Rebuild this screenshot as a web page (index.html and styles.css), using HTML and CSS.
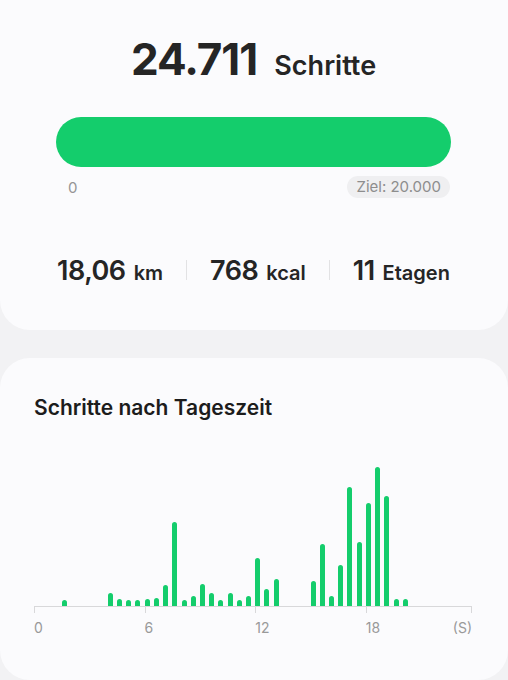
FILE: index.html
```html
<!DOCTYPE html>
<html lang="de">
<head>
    <meta charset="UTF-8">
    <meta name="viewport" content="width=device-width, initial-scale=1.0">
    <title>Schritte</title>
    <link rel="stylesheet" href="styles.css">
</head>
<body>
    <section class="summary">
        <div class="total">24.711<span class="unit">Schritte</span></div>
        <div class="progress"></div>
        <div class="scale">
            <span class="start">0</span>
            <span class="goal">Ziel: 20.000</span>
        </div>
        <div class="stats">
            <div class="stat">18,06<span>km</span></div>
            <div class="sep"></div>
            <div class="stat">768<span>kcal</span></div>
            <div class="sep"></div>
            <div class="stat">11<span>Etagen</span></div>
        </div>
    </section>

    <section class="chart">
        <h2>Schritte nach Tageszeit</h2>
        <div class="plot">
            <div class="bars">
                <div></div><div></div><div></div>
                <div class="bar" style="height:6px"></div>
                <div></div><div></div><div></div><div></div>
                <div class="bar" style="height:13px"></div>
                <div class="bar" style="height:7px"></div>
                <div class="bar" style="height:6px"></div>
                <div class="bar" style="height:6px"></div>
                <div class="bar" style="height:7px"></div>
                <div class="bar" style="height:8px"></div>
                <div class="bar" style="height:21px"></div>
                <div class="bar" style="height:84px"></div>
                <div class="bar" style="height:6px"></div>
                <div class="bar" style="height:10px"></div>
                <div class="bar" style="height:22px"></div>
                <div class="bar" style="height:13px"></div>
                <div class="bar" style="height:6px"></div>
                <div class="bar" style="height:13px"></div>
                <div class="bar" style="height:6px"></div>
                <div class="bar" style="height:10px"></div>
                <div class="bar" style="height:48px"></div>
                <div class="bar" style="height:17px"></div>
                <div class="bar" style="height:27px"></div>
                <div></div><div></div><div></div>
                <div class="bar" style="height:25px"></div>
                <div class="bar" style="height:62px"></div>
                <div class="bar" style="height:10px"></div>
                <div class="bar" style="height:41px"></div>
                <div class="bar" style="height:119px"></div>
                <div class="bar" style="height:64px"></div>
                <div class="bar" style="height:103px"></div>
                <div class="bar" style="height:139px"></div>
                <div class="bar" style="height:110px"></div>
                <div class="bar" style="height:7px"></div>
                <div class="bar" style="height:7px"></div>
            </div>
            <div class="ticks">
                <div></div><div></div><div></div><div></div>
            </div>
            <div class="labels">
                <span>0</span>
                <span>6</span>
                <span>12</span>
                <span class="last">18<em>(S)</em></span>
            </div>
        </div>
    </section>
</body>
</html>
```

FILE: styles.css
```css
body {
    margin: 0;
    background: #f2f2f4;
    font-family: Inter, "Noto Sans", sans-serif;
    color: #252525;
}

.summary {
    background: #fbfbfd;
    border-radius: 0 0 30px 30px;
    height: 330px;
    box-sizing: border-box;
    padding: 37px 57px 0 56px;
}

.total {
    text-align: center;
    font-size: 44px;
    font-weight: 700;
    line-height: 44px;
    height: 44px;
    letter-spacing: -1px;
}

.total .unit {
    font-size: 27px;
    font-weight: 600;
    margin-left: 17px;
    letter-spacing: 0;
}

.progress {
    margin-top: 36px;
    height: 50px;
    border-radius: 25px;
    background: #14cd6c;
}

.scale {
    display: flex;
    justify-content: space-between;
    align-items: center;
    margin-top: 9px;
    height: 22px;
    font-size: 15px;
    color: #959595;
}

.start {
    padding-left: 12px;
}

.goal {
    background: #efeff1;
    border-radius: 11px;
    padding: 0 9px;
    line-height: 22px;
    color: #8d8d8d;
    margin-right: 1px;
}

.stats {
    display: flex;
    justify-content: center;
    align-items: center;
    gap: 23px;
    margin-top: 57px;
    height: 30px;
}

.stat {
    font-size: 27px;
    font-weight: 600;
    letter-spacing: -0.5px;
}

.stat span {
    font-size: 20px;
    margin-left: 8px;
    letter-spacing: 0;
}

.sep {
    width: 1px;
    height: 20px;
    background: #e2e2e4;
}

.chart {
    margin-top: 28px;
    background: #fbfbfd;
    border-radius: 30px;
    height: 322px;
    box-sizing: border-box;
    padding: 38px 36px 0 34px;
}

.chart h2 {
    margin: 0;
    font-size: 21px;
    font-weight: 600;
    line-height: 24px;
    color: #1c1c1c;
}

.plot {
    width: 438px;
}

.bars {
    display: grid;
    grid-template-columns: repeat(48, 9.22px);
    align-items: end;
    height: 186px;
    border-bottom: 1.5px solid #d8d8da;
}

.bar {
    width: 5px;
    border-radius: 2.5px 2.5px 0 0;
    background: #14cd6c;
}

.ticks {
    display: grid;
    grid-template-columns: 110.6px 110.6px 110.6px 1fr;
    height: 6px;
}

.ticks div {
    border-left: 1.5px solid #d8d8da;
}

.ticks div:last-child {
    border-right: 1.5px solid #d8d8da;
}

.labels {
    display: grid;
    grid-template-columns: 110.6px 110.6px 110.6px 1fr;
    margin-top: 6px;
    font-size: 14px;
    line-height: 18px;
    color: #999;
}

.labels .last {
    display: flex;
    justify-content: space-between;
}

.labels em {
    font-style: normal;
}
```
